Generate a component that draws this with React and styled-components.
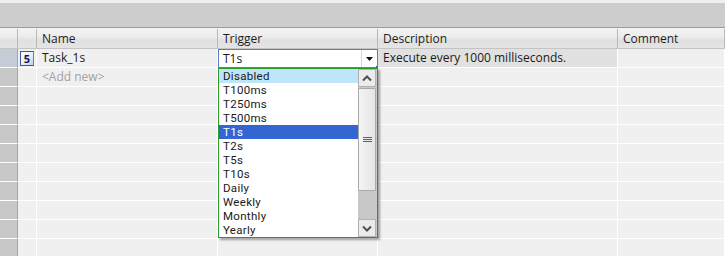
import React from "react";
import styled, { createGlobalStyle } from "styled-components";

const FONT = `"Open Sans", "Noto Sans", sans-serif`;
const LIST_FONT = `Roboto, "Open Sans", sans-serif`;

const Global = createGlobalStyle`
  html, body { margin: 0; padding: 0; background: #f0f0f0; }
  body { font-family: ${FONT}; font-size: 12px; color: #1a1a1a; overflow: hidden; }
  * { box-sizing: border-box; }
`;

const Page = styled.div`
  width: 725px;
  height: 256px;
  overflow: hidden;
  background: #f0f0f0;
`;

const TopStrip = styled.div`
  height: 3px;
  background: #efefef;
`;

const Band = styled.div`
  height: 25px;
  background: #cdcdcd;
  border-bottom: 1px solid #9c9c9c;
`;

const Gap = styled.div`
  height: 1px;
  background: #f0f0f0;
`;

const COLS = "18px 19px 181px 160px 240px 1fr";

const Grid = styled.div`
  display: flex;
  flex-direction: column;
`;

const HeaderRow = styled.div`
  display: grid;
  grid-template-columns: ${COLS};
  height: 20px;
  background: linear-gradient(to bottom, #f3f3f3 0%, #ececec 40%, #e0e0e0 60%, #e4e4e4 100%);
  border-bottom: 1px solid #c4c4c4;
`;

const HeadCell = styled.div`
  border-right: 1px solid #b9b9b9;
  padding-left: 5px;
  display: flex;
  align-items: center;
  color: #1e1e1e;
  white-space: nowrap;
  overflow: hidden;
  line-height: 16px;
`;

const Row = styled.div`
  display: grid;
  grid-template-columns: ${COLS};
  height: 19px;
`;

const RowHead = styled.div`
  background: ${(p) => (p.$active ? "#c5ccd5" : "#c8c8c8")};
  border-right: 1px solid #a4a4a4;
  border-bottom: 1px solid #ffffff;
`;

const Cell = styled.div`
  position: relative;
  background: ${(p) => p.$bg || "#f0f0f0"};
  border-right: 1px solid #ffffff;
  border-bottom: 1px solid #ffffff;
  padding-left: 5px;
  display: flex;
  align-items: center;
  white-space: nowrap;
  line-height: 16px;
  color: ${(p) => (p.$muted ? "#a3a3a3" : "#1a1a1a")};
`;

const IconCell = styled(Cell)`
  padding-left: 2px;
`;

const NumIcon = styled.div`
  width: 14px;
  height: 15px;
  border: 1px solid #3a56a8;
  border-right-color: #6a82c8;
  background: linear-gradient(135deg, #ffffff 0%, #e8eefc 55%, #bccbf0 100%);
  display: flex;
  align-items: center;
  justify-content: center;
  font-size: 11px;
  font-weight: 700;
  color: #141a40;
  line-height: 1;
`;

const EditCell = styled.div`
  position: relative;
  border-right: 1px solid #ffffff;
  border-bottom: 1px solid #ffffff;
`;

const Combo = styled.div`
  position: relative;
  height: 19px;
  width: 160px;
  margin-bottom: -1px;
  background: #ffffff;
  border: 1px solid #5a7cc6;
  display: flex;
  align-items: center;
`;

const ComboText = styled.div`
  flex: 1;
  padding-left: 4px;
  line-height: 16px;
`;

const ComboButton = styled.div`
  width: 16px;
  height: 100%;
  border-left: 1px solid #d8d8d8;
  display: flex;
  align-items: center;
  justify-content: center;
`;

const CornerHandle = styled.div`
  position: absolute;
  right: -2px;
  bottom: -2px;
  width: 3px;
  height: 3px;
  background: #3a64c8;
`;

const DropList = styled.div`
  position: absolute;
  top: 19px;
  left: 0;
  width: 160px;
  height: 170px;
  background: #ffffff;
  border: 1px solid #2a9a2a;
  box-shadow: 2px 2px 2px rgba(0, 0, 0, 0.35);
  display: flex;
  z-index: 5;
`;

const Items = styled.div`
  flex: 1;
  display: flex;
  flex-direction: column;
  font-family: ${LIST_FONT};
  font-size: 11.5px;
  letter-spacing: 0.3px;
`;

const Item = styled.div`
  height: 14px;
  line-height: 14px;
  padding-left: 4px;
  background: ${(p) => (p.$sel ? "#3366d2" : p.$hover ? "#bee5f9" : "transparent")};
  color: ${(p) => (p.$sel ? "#ffffff" : "#1a1a1a")};
  white-space: nowrap;
`;

const ScrollBar = styled.div`
  width: 19px;
  background: #c8c8c8;
  display: flex;
  flex-direction: column;
  padding-right: 1px;
`;

const ScrollBtn = styled.div`
  height: 18px;
  background: #ebebeb;
  border: 1px solid #b2b2b2;
  display: flex;
  align-items: center;
  justify-content: center;
`;

const Thumb = styled.div`
  margin-top: 1px;
  height: 103px;
  background: linear-gradient(to right, #f4f4f4, #e4e4e4);
  border: 1px solid #a9a9a9;
  border-radius: 1px;
  display: flex;
  align-items: center;
  justify-content: center;
`;

const Track = styled.div`
  flex: 1;
`;

const DownArrow = () => (
  <svg width="7" height="4" viewBox="0 0 7 4">
    <path d="M0 0 H7 L3.5 4 Z" fill="#111" />
  </svg>
);

const Chevron = ({ up }) => (
  <svg width="10" height="7" viewBox="0 0 10 7">
    <path
      d={up ? "M1 5.5 L5 1.5 L9 5.5" : "M1 1.5 L5 5.5 L9 1.5"}
      fill="none"
      stroke="#505050"
      strokeWidth="2"
    />
  </svg>
);

const Grip = () => (
  <svg width="9" height="6" viewBox="0 0 9 6">
    <path d="M0 0.5 H9 M0 2.5 H9 M0 4.5 H9" stroke="#606060" strokeWidth="1" />
  </svg>
);

const options = [
  "Disabled", "T100ms", "T250ms", "T500ms", "T1s", "T2s", "T5s", "T10s",
  "Daily", "Weekly", "Monthly", "Yearly",
];

export default function App() {
  const emptyRows = Array.from({ length: 9 });
  return (
    <Page>
      <Global />
      <TopStrip />
      <Band />
      <Gap />
      <Grid>
        <HeaderRow>
          <HeadCell />
          <HeadCell />
          <HeadCell>Name</HeadCell>
          <HeadCell>Trigger</HeadCell>
          <HeadCell>Description</HeadCell>
          <HeadCell>Comment</HeadCell>
        </HeaderRow>

        <Row>
          <RowHead $active />
          <IconCell>
            <NumIcon>5</NumIcon>
          </IconCell>
          <Cell>Task_1s</Cell>
          <EditCell>
            <Combo>
              <ComboText>T1s</ComboText>
              <ComboButton>
                <DownArrow />
              </ComboButton>
              <CornerHandle />
            </Combo>
            <DropList>
              <Items>
                {options.map((o) => (
                  <Item key={o} $hover={o === "Disabled"} $sel={o === "T1s"}>
                    {o}
                  </Item>
                ))}
              </Items>
              <ScrollBar>
                <ScrollBtn>
                  <Chevron up />
                </ScrollBtn>
                <Thumb>
                  <Grip />
                </Thumb>
                <Track />
                <ScrollBtn>
                  <Chevron />
                </ScrollBtn>
              </ScrollBar>
            </DropList>
          </EditCell>
          <Cell $bg="#e1e1e1">Execute every 1000 milliseconds.</Cell>
          <Cell />
        </Row>

        <Row>
          <RowHead />
          <Cell />
          <Cell $muted>&lt;Add new&gt;</Cell>
          <Cell />
          <Cell />
          <Cell />
        </Row>

        {emptyRows.map((_, i) => (
          <Row key={i}>
            <RowHead />
            <Cell />
            <Cell />
            <Cell />
            <Cell />
            <Cell />
          </Row>
        ))}
      </Grid>
    </Page>
  );
}
